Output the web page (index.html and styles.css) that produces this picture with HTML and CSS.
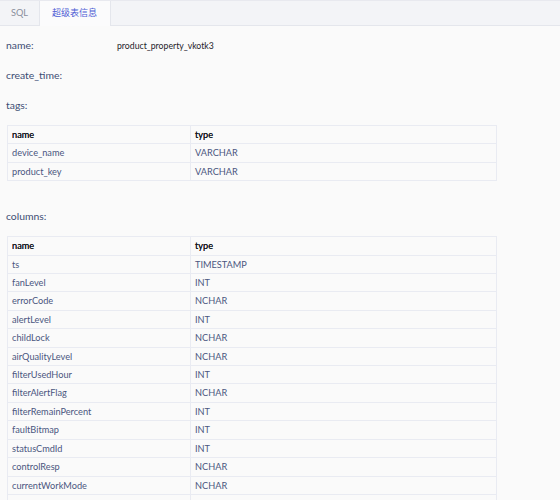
FILE: index.html
```html
<!DOCTYPE html>
<html lang="zh">
<head>
    <meta charset="UTF-8">
    <title>超级表信息</title>
    <link rel="stylesheet" href="styles.css">
</head>
<body>
    <div class="tabs">
        <div class="tab">SQL</div>
        <div class="tab active">超级表信息</div>
    </div>

    <div class="info">
        <div class="field"><span class="label">name:</span><span class="value">product_property_vkotk3</span></div>
        <div class="field"><span class="label">create_time:</span><span class="value"></span></div>
        <div class="field"><span class="label">tags:</span></div>

        <table>
            <tr><th>name</th><th>type</th></tr>
            <tr><td>device_name</td><td>VARCHAR</td></tr>
            <tr><td>product_key</td><td>VARCHAR</td></tr>
        </table>

        <div class="field section"><span class="label">columns:</span></div>

        <table>
            <tr><th>name</th><th>type</th></tr>
            <tr><td>ts</td><td>TIMESTAMP</td></tr>
            <tr><td>fanLevel</td><td>INT</td></tr>
            <tr><td>errorCode</td><td>NCHAR</td></tr>
            <tr><td>alertLevel</td><td>INT</td></tr>
            <tr><td>childLock</td><td>NCHAR</td></tr>
            <tr><td>airQualityLevel</td><td>NCHAR</td></tr>
            <tr><td>filterUsedHour</td><td>INT</td></tr>
            <tr><td>filterAlertFlag</td><td>NCHAR</td></tr>
            <tr><td>filterRemainPercent</td><td>INT</td></tr>
            <tr><td>faultBitmap</td><td>INT</td></tr>
            <tr><td>statusCmdId</td><td>INT</td></tr>
            <tr><td>controlResp</td><td>NCHAR</td></tr>
            <tr><td>currentWorkMode</td><td>NCHAR</td></tr>
            <tr><td></td><td></td></tr>
        </table>
    </div>
</body>
</html>
```

FILE: styles.css
```css
body {
    margin: 0;
    font-family: Lato, "Noto Sans CJK SC", sans-serif;
    background-color: #fafafa;
    color: #3d4b6b;
}
.tabs {
    display: flex;
    height: 24px;
    background-color: #f3f4f7;
    border-top: 1px solid #e8e9ef;
    border-bottom: 1px solid #e4e6ec;
}
.tab {
    padding: 0 11px;
    font-size: 9.2px;
    line-height: 24px;
    color: #8a8f9c;
}
.tab.active {
    background-color: #fbfbfc;
    color: #4b5bd4;
    border-left: 1px solid #e4e6ec;
    border-right: 1px solid #e4e6ec;
    margin-bottom: -1px;
    padding: 0 13px 0 12px;
    font-size: 9px;
}
.info {
    padding: 4px 6px 0 7px;
}
.field {
    display: flex;
    height: 30px;
    align-items: center;
    font-size: 10.4px;
    margin-left: -1px;
}
.field.section {
    margin-top: 20px;
}
.label {
    width: 111px;
    color: #3d4d74;
}
.value {
    color: #1f232b;
    font-size: 8.7px;
}
table {
    width: 490px;
    border-collapse: collapse;
    margin-top: 5px;
    font-size: 9.2px;
}
th, td {
    border: 1px solid #e9ebf2;
    padding: 3px 5px 3px 4px;
    height: 11.4px;
    line-height: 11.4px;
    text-align: left;
}
th {
    font-weight: normal;
    color: #15181f;
    text-shadow: 0 0 0.3px #15181f;
}
th:first-child, td:first-child {
    width: 173px;
}
td {
    color: #4a5680;
}
```
